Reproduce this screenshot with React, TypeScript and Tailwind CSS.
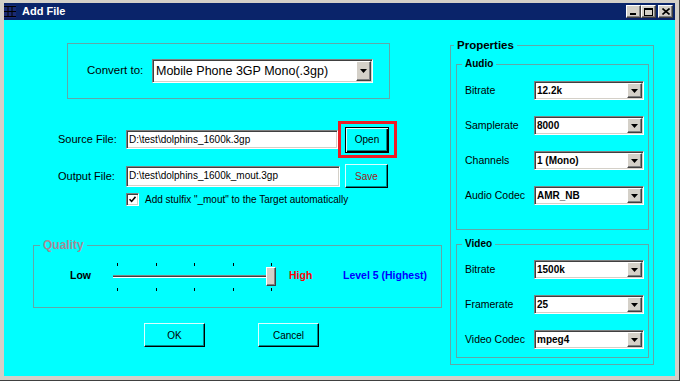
import React from "react";

const sunken =
  "bg-white border border-t-[#808080] border-l-[#808080] border-b-white border-r-white shadow-[inset_1px_1px_0_#404040,inset_-1px_-1px_0_#d4d0c8]";
const raisedGray =
  "bg-[#d4d0c8] border border-t-white border-l-white border-b-[#404040] border-r-[#404040] shadow-[inset_-1px_-1px_0_#808080]";

function DropBtn({ className = "" }: { className?: string }) {
  return (
    <span className={`flex items-center justify-center shrink-0 ${raisedGray} ${className}`}>
      <svg width="7" height="4" viewBox="0 0 7 4">
        <path d="M0 0h7L3.5 4z" fill="#000" />
      </svg>
    </span>
  );
}

function Combo({ value, big }: { value: string; big?: boolean }) {
  if (big) {
    return (
      <div className={`flex items-center w-[221px] h-[24px] p-[1px] ${sunken}`}>
        <span className="flex-1 pl-[2px] text-[12.5px] text-black leading-none">{value}</span>
        <DropBtn className="w-[15px] h-[20px]" />
      </div>
    );
  }
  return (
    <div className={`flex items-center w-[110px] h-[19px] p-[1px] ${sunken}`}>
      <span className="flex-1 pl-[1px] text-[10px] font-bold text-black leading-none">{value}</span>
      <DropBtn className="w-[15px] h-[15px]" />
    </div>
  );
}

function Btn({ label, def, red }: { label: string; def?: boolean; red?: boolean }) {
  const edge = def
    ? "border border-black shadow-[inset_1px_1px_0_#d8ffff,inset_-1px_-1px_0_#000,inset_-2px_-2px_0_#008b8b]"
    : "border border-t-[#d8ffff] border-l-[#d8ffff] border-b-black border-r-black shadow-[inset_-1px_-1px_0_#008b8b]";
  return (
    <button className={`flex items-center justify-center w-full h-full bg-[#00ffff] text-[10px] ${red ? "text-[#9b1b1b]" : "text-black"} ${edge}`}>
      {label}
    </button>
  );
}

function PropRow({ label, value }: { label: string; value: string }) {
  return (
    <div className="flex items-center h-[19px]">
      <span className="w-[69px] text-[10.5px] text-black">{label}</span>
      <Combo value={value} />
    </div>
  );
}

function Ticks() {
  return (
    <div className="flex justify-between pl-[5px] pr-[4px] h-[3px]">
      {[0, 1, 2, 3, 4].map((i) => (
        <span key={i} className="w-[1px] h-[3px] bg-black" />
      ))}
    </div>
  );
}

export default function App() {
  return (
    <div className="w-[680px] h-[381px] bg-[#d4d0c8] pt-[3px] pl-[4px] pr-[4px] pb-[4px] flex flex-col border-r border-b border-[#404040] font-['Liberation_Sans',Arial,sans-serif]">
      {/* title bar */}
      <div className="h-[17px] bg-[#0a246a] flex items-center pr-[2px] shrink-0">
        <svg width="12" height="13" viewBox="0 0 12 13" className="shrink-0">
          <rect x="0" y="0" width="12" height="13" fill="#1b2a72" />
          <path d="M0 1.5h12M0 6.5h12M0 11.5h12M4 1.5v10M8 1.5v10" stroke="#000" strokeWidth="1" />
        </svg>
        <span className="ml-[6px] text-[11px] font-bold text-white leading-none">Add File</span>
        <div className="ml-auto flex items-center">
          <span className={`w-[15px] h-[13px] flex items-end pl-[3px] pb-[2px] ${raisedGray}`}>
            <span className="w-[6px] h-[2px] bg-black" />
          </span>
          <span className={`w-[15px] h-[13px] flex items-center justify-center ${raisedGray}`}>
            <span className="w-[9px] h-[8px] border border-black border-t-2" />
          </span>
          <span className={`ml-[2px] w-[15px] h-[13px] flex items-center justify-center ${raisedGray}`}>
            <svg width="8" height="7" viewBox="0 0 8 7">
              <path d="M0.5 0.5L7.5 6.5M7.5 0.5L0.5 6.5" stroke="#000" strokeWidth="1.6" />
            </svg>
          </span>
        </div>
      </div>

      {/* dialog body */}
      <div className="flex-1 bg-[#00ffff] flex flex-row">
        {/* left column */}
        <div className="w-[438px] pl-[29px] flex flex-col">
          <div className="mt-[23px] ml-[34px] w-[323px] h-[56px] border border-[#5fa8a8] flex items-center pl-[19px]">
            <span className="w-[65px] text-[11.5px] text-black">Convert to:</span>
            <Combo big value="Mobile Phone 3GP Mono(.3gp)" />
          </div>

          <div className="mt-[22px] h-[37px] flex items-center pl-[25px]">
            <span className="w-[68px] text-[11px] text-black">Source File:</span>
            <div className={`w-[212px] h-[19px] flex items-center pl-[2px] ${sunken}`}>
              <span className="text-[10px] text-black leading-none">D:\test\dolphins_1600k.3gp</span>
            </div>
            <div className="w-[59px] h-[37px] border-[3px] border-[#ed1c24] flex items-center pl-[4px]">
              <div className="w-[44px] h-[26px]">
                <Btn label="Open" def />
              </div>
            </div>
          </div>

          <div className="mt-[6px] h-[24px] flex items-center pl-[25px]">
            <span className="w-[68px] text-[11px] text-black">Output File:</span>
            <div className={`w-[214px] h-[21px] flex items-center pl-[2px] ${sunken}`}>
              <span className="text-[10px] text-black leading-none">D:\test\dolphins_1600k_mout.3gp</span>
            </div>
            <div className="ml-[5px] w-[43px] h-[24px]">
              <Btn label="Save" red />
            </div>
          </div>

          <div className="mt-[5px] h-[13px] flex items-center pl-[93px]">
            <span className={`w-[13px] h-[13px] flex items-center justify-center ${sunken}`}>
              <svg width="7" height="7" viewBox="0 0 7 7">
                <path d="M0.5 3.2L2.6 5.4L6.5 0.8" stroke="#000" strokeWidth="1.6" fill="none" />
              </svg>
            </span>
            <span className="ml-[6px] text-[10px] text-black leading-none">Add stulfix "_mout" to the Target automatically</span>
          </div>

          <fieldset className="mt-[32px] w-[409px] h-[70px] border border-[#5fa8a8]">
            <legend className="ml-[6px] px-[3px] text-[12px] font-bold leading-[14px] text-[#a48b95]">Quality</legend>
            <div className="flex items-start pt-[10px] pl-[36px]">
              <span className="w-[42px] mt-[7px] text-[10.5px] font-bold leading-[13px] text-black">Low</span>
              <div className="relative w-[164px] h-[30px] pt-[1px]">
                <Ticks />
                <div className="mt-[9px] ml-[1px] w-[162px] h-[3px] border-t border-t-[#808080] border-b border-b-white bg-[#404040]" />
                <div className="mt-[10px]">
                  <Ticks />
                </div>
                <span className={`absolute left-[154px] top-[5px] w-[10px] h-[19px] ${raisedGray}`} />
              </div>
              <span className="ml-[13px] w-[54px] mt-[7px] text-[10.5px] font-bold leading-[13px] text-[#ff0000]">High</span>
              <span className="mt-[7px] text-[10.5px] font-bold leading-[13px] text-[#0000ff]">Level 5 (Highest)</span>
            </div>
          </fieldset>

          <div className="mt-[15px] pl-[111px] flex gap-[53px]">
            <div className="w-[61px] h-[24px]">
              <Btn label="OK" />
            </div>
            <div className="w-[61px] h-[24px]">
              <Btn label="Cancel" />
            </div>
          </div>
        </div>

        {/* right column */}
        <div className="ml-[8px] w-[204px]">
          <fieldset className="mt-[18px] w-[204px] h-[327px] border border-[#5fa8a8] pl-[5px] pr-[4px]">
            <legend className="-ml-[2px] px-[3px] text-[11.5px] font-bold leading-[14px] text-black">Properties</legend>
            <fieldset className="mt-[5px] h-[173px] border border-[#5fa8a8]">
              <legend className="ml-[5px] px-[3px] text-[10px] font-bold leading-[14px] text-black">Audio</legend>
              <div className="pt-[10px] pl-[8px] flex flex-col gap-[16px]">
                <PropRow label="Bitrate" value="12.2k" />
                <PropRow label="Samplerate" value="8000" />
                <PropRow label="Channels" value="1 (Mono)" />
                <PropRow label="Audio Codec" value="AMR_NB" />
              </div>
            </fieldset>
            <fieldset className="mt-[7px] h-[121px] border border-[#5fa8a8]">
              <legend className="ml-[5px] px-[3px] text-[10px] font-bold leading-[14px] text-black">Video</legend>
              <div className="pt-[9px] pl-[8px] flex flex-col gap-[16px]">
                <PropRow label="Bitrate" value="1500k" />
                <PropRow label="Framerate" value="25" />
                <PropRow label="Video Codec" value="mpeg4" />
              </div>
            </fieldset>
          </fieldset>
        </div>
      </div>
    </div>
  );
}
